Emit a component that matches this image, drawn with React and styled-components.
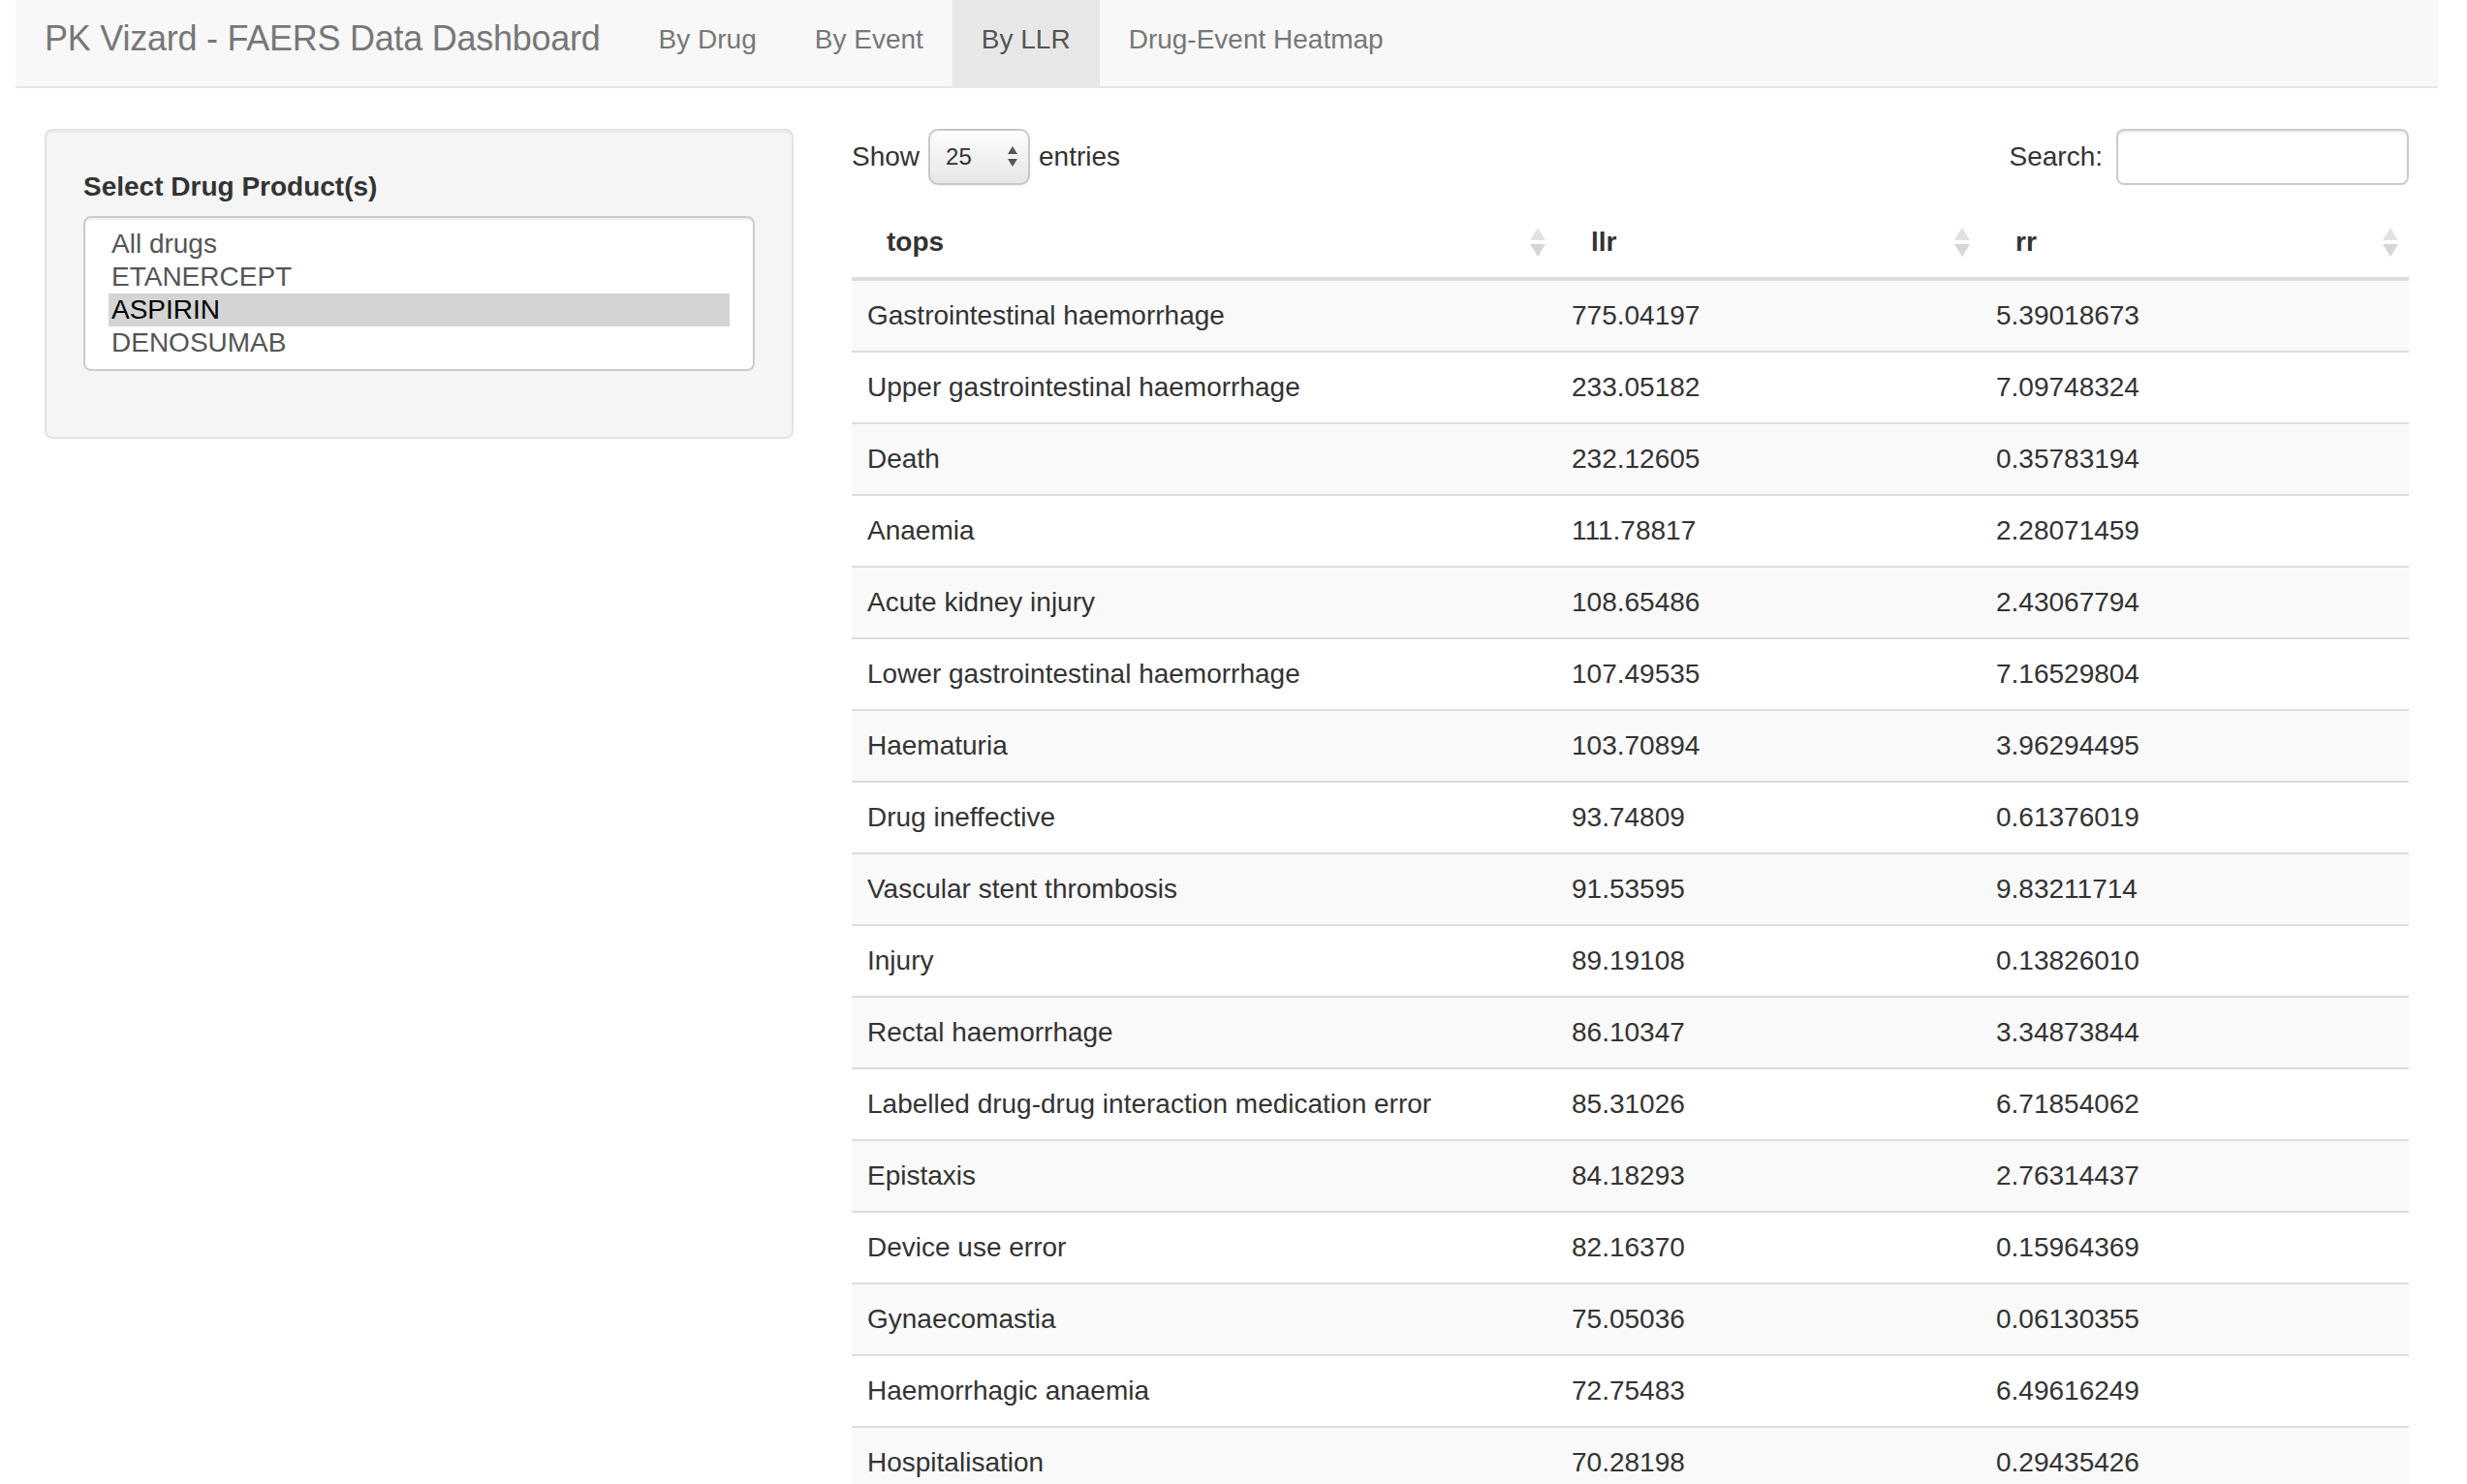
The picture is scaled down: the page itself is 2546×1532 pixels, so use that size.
import styled, { createGlobalStyle } from 'styled-components';

const GlobalStyle = createGlobalStyle`
  * {
    box-sizing: border-box;
  }

  body {
    margin: 0;
    background: #fff;
    color: #333;
    font-family: "Liberation Sans", Arial, sans-serif;
  }
`;

const tabs = ['By Drug', 'By Event', 'By LLR', 'Drug-Event Heatmap'];

const drugs = [
  { name: 'All drugs' },
  { name: 'ETANERCEPT' },
  { name: 'ASPIRIN', selected: true },
  { name: 'DENOSUMAB' },
];

const rows = [
  ['Gastrointestinal haemorrhage', '775.04197', '5.39018673'],
  ['Upper gastrointestinal haemorrhage', '233.05182', '7.09748324'],
  ['Death', '232.12605', '0.35783194'],
  ['Anaemia', '111.78817', '2.28071459'],
  ['Acute kidney injury', '108.65486', '2.43067794'],
  ['Lower gastrointestinal haemorrhage', '107.49535', '7.16529804'],
  ['Haematuria', '103.70894', '3.96294495'],
  ['Drug ineffective', '93.74809', '0.61376019'],
  ['Vascular stent thrombosis', '91.53595', '9.83211714'],
  ['Injury', '89.19108', '0.13826010'],
  ['Rectal haemorrhage', '86.10347', '3.34873844'],
  ['Labelled drug-drug interaction medication error', '85.31026', '6.71854062'],
  ['Epistaxis', '84.18293', '2.76314437'],
  ['Device use error', '82.16370', '0.15964369'],
  ['Gynaecomastia', '75.05036', '0.06130355'],
  ['Haemorrhagic anaemia', '72.75483', '6.49616249'],
  ['Hospitalisation', '70.28198', '0.29435426'],
];

function SortIcon() {
  return (
    <svg width="16" height="30" viewBox="0 0 16 30">
      <path d="M8 0 L16 13 L0 13 Z" fill="#e2e2e2" />
      <path d="M0 17 L16 17 L8 30 Z" fill="#d6d6d6" />
    </svg>
  );
}

function SpinArrows() {
  return (
    <svg width="10" height="22" viewBox="0 0 10 22">
      <path d="M5 0 L10 8 L0 8 Z" fill="#555" />
      <path d="M0 13 L10 13 L5 21 Z" fill="#555" />
    </svg>
  );
}

export default function App() {
  return (
    <>
      <GlobalStyle />
      <Page>
        <Navbar>
          <Brand>PK Vizard - FAERS Data Dashboard</Brand>
          {tabs.map((t) => (
            <Tab key={t} active={t === 'By LLR'}>
              {t}
            </Tab>
          ))}
        </Navbar>

        <Content>
          <Well>
            <Label>Select Drug Product(s)</Label>
            <ListBox>
              {drugs.map((d) => (
                <Option key={d.name} selected={d.selected}>
                  {d.name}
                </Option>
              ))}
            </ListBox>
          </Well>

          <Main>
            <Toolbar>
              <Group>
                Show
                <LengthSelect>
                  25
                  <SpinArrows />
                </LengthSelect>
                entries
              </Group>
              <Group>
                Search:
                <SearchInput type="text" />
              </Group>
            </Toolbar>

            <Table>
              <colgroup>
                <col style={{ width: 727 }} />
                <col style={{ width: 438 }} />
                <col />
              </colgroup>
              <thead>
                <tr>
                  {['tops', 'llr', 'rr'].map((h) => (
                    <Th key={h}>
                      <HeadCell>
                        {h}
                        <SortIcon />
                      </HeadCell>
                    </Th>
                  ))}
                </tr>
              </thead>
              <tbody>
                {rows.map((r) => (
                  <Tr key={r[0]}>
                    {r.map((c, i) => (
                      <Td key={i}>{c}</Td>
                    ))}
                  </Tr>
                ))}
              </tbody>
            </Table>
          </Main>
        </Content>
      </Page>
    </>
  );
}

const Page = styled.div`
  padding: 0 30px 0 16px;
`;

const Navbar = styled.nav`
  display: flex;
  height: 91px;
  padding-left: 30px;
  background: #f8f8f8;
  border-bottom: 2px solid #e7e7e7;
`;

const Brand = styled.div`
  padding: 20px 30px 0 0;
  font-size: 36px;
  line-height: 40px;
  letter-spacing: -0.25px;
  color: #777;
  white-space: nowrap;
`;

const Tab = styled.div`
  padding: 21px 30px 0;
  font-size: 28px;
  line-height: 40px;
  white-space: nowrap;
  color: ${(p) => (p.active ? '#555' : '#777')};
  background: ${(p) => (p.active ? '#e7e7e7' : 'transparent')};
`;

const Content = styled.div`
  display: grid;
  grid-template-columns: 773px 1fr;
  column-gap: 60px;
  align-items: start;
  padding: 42px 30px 0;
`;

const Well = styled.div`
  padding: 38px 38px 68px;
  background: #f5f5f5;
  border: 2px solid #e3e3e3;
  border-radius: 8px;
  box-shadow: inset 0 2px 2px rgba(0, 0, 0, 0.05);
`;

const Label = styled.div`
  margin-bottom: 10px;
  font-size: 28px;
  line-height: 40px;
  font-weight: bold;
  color: #333;
`;

const ListBox = styled.div`
  height: 160px;
  padding: 10px 24px;
  background: #fff;
  border: 2px solid #ccc;
  border-radius: 8px;
  box-shadow: inset 0 2px 2px rgba(0, 0, 0, 0.075);
`;

const Option = styled.div`
  padding-left: 3px;
  font-size: 28px;
  line-height: 34px;
  color: ${(p) => (p.selected ? '#000' : '#555')};
  background: ${(p) => (p.selected ? '#d4d4d4' : 'transparent')};
`;

const Main = styled.div`
  display: flex;
  flex-direction: column;
`;

const Toolbar = styled.div`
  display: flex;
  justify-content: space-between;
  align-items: center;
  height: 58px;
`;

const Group = styled.div`
  display: flex;
  align-items: center;
  gap: 9px;
  font-size: 28px;
  color: #333;
`;

const LengthSelect = styled.div`
  display: flex;
  align-items: center;
  justify-content: space-between;
  width: 105px;
  height: 58px;
  padding: 0 11px 0 16px;
  font-size: 24px;
  color: #333;
  border: 2px solid #c8c8c8;
  border-radius: 10px;
  background: linear-gradient(#fdfdfd, #e6e6e6);
  box-shadow: 0 1px 2px rgba(0, 0, 0, 0.08);
`;

const SearchInput = styled.input`
  width: 302px;
  height: 58px;
  margin-left: 5px;
  border: 2px solid #ccc;
  border-radius: 8px;
  background: #fff;
  box-shadow: inset 0 2px 2px rgba(0, 0, 0, 0.075);
  outline: none;
`;

const Table = styled.table`
  width: 100%;
  margin-top: 23px;
  border-collapse: separate;
  border-spacing: 0;
  table-layout: fixed;
`;

const Th = styled.th`
  padding: 16px 11px 16px 36px;
  border-bottom: 4px solid #ddd;
  font-size: 28px;
  line-height: 40px;
  font-weight: bold;
  text-align: left;
  color: #333;
`;

const HeadCell = styled.div`
  display: flex;
  align-items: center;
  justify-content: space-between;
`;

const Tr = styled.tr`
  &:nth-child(odd) {
    background: #f9f9f9;
  }

  &:not(:first-child) td {
    border-top: 2px solid #ddd;
  }
`;

const Td = styled.td`
  padding: 16px;
  font-size: 28px;
  line-height: 40px;
  color: #333;
  white-space: nowrap;
`;
